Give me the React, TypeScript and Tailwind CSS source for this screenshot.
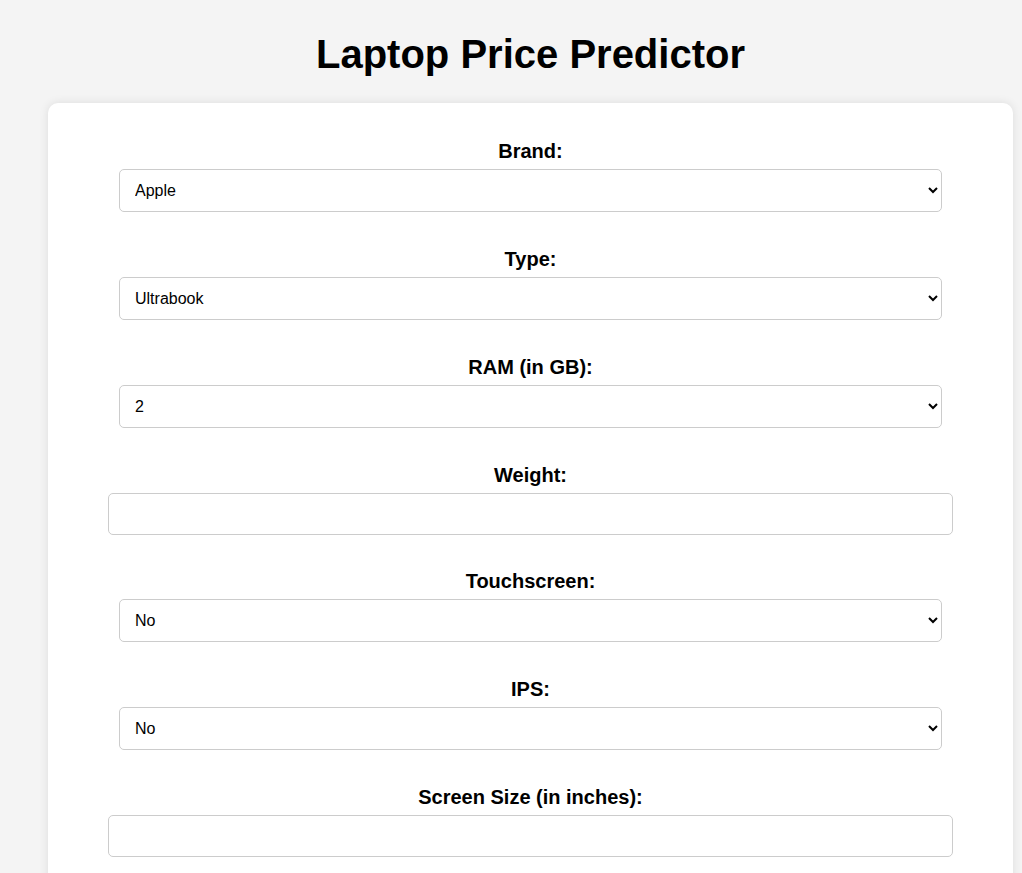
import React, { useState } from 'react';

type Field =
  | { kind: 'select'; label: string; options: string[] }
  | { kind: 'input'; label: string };

const fields: Field[] = [
  { kind: 'select', label: 'Brand:', options: ['Apple', 'HP', 'Acer', 'Asus', 'Dell', 'Lenovo', 'MSI', 'Toshiba'] },
  { kind: 'select', label: 'Type:', options: ['Ultrabook', 'Notebook', 'Netbook', 'Gaming', '2 in 1 Convertible', 'Workstation'] },
  { kind: 'select', label: 'RAM (in GB):', options: ['2', '4', '6', '8', '12', '16', '24', '32', '64'] },
  { kind: 'input', label: 'Weight:' },
  { kind: 'select', label: 'Touchscreen:', options: ['No', 'Yes'] },
  { kind: 'select', label: 'IPS:', options: ['No', 'Yes'] },
  { kind: 'input', label: 'Screen Size (in inches):' },
  { kind: 'select', label: 'Screen Resolution:', options: ['1920x1080', '1366x768', '1600x900', '3840x2160', '3200x1800', '2880x1800', '2560x1600', '2560x1440', '2304x1440'] },
  { kind: 'select', label: 'CPU:', options: ['Intel Core i5', 'Intel Core i7', 'Intel Core i3', 'Other Intel Processor', 'AMD Processor'] },
  { kind: 'select', label: 'HDD (in GB):', options: ['0', '128', '256', '512', '1024', '2048'] },
  { kind: 'select', label: 'SSD (in GB):', options: ['0', '8', '128', '256', '512', '1024'] },
  { kind: 'select', label: 'GPU:', options: ['Intel', 'AMD', 'Nvidia'] },
  { kind: 'select', label: 'OS:', options: ['Mac', 'Windows', 'Others/No OS/Linux'] },
];

export default function App() {
  const [values, setValues] = useState<Record<string, string>>({});

  const setValue = (label: string, value: string) => {
    setValues({ ...values, [label]: value });
  };

  return (
    <div className="min-h-screen bg-[#f4f4f4] text-black font-['Liberation_Sans',Arial,sans-serif]">
      <div className="ml-[48px] w-[965px] pt-[31px] pb-[40px]">
        <h1 className="text-center text-[40px] leading-[46px] font-bold mb-[26px]">
          Laptop Price Predictor
        </h1>

        <form
          className="bg-white rounded-[10px] shadow-[0_0_10px_rgba(0,0,0,0.1)] pt-[37px] pb-[40px] flex flex-col items-center"
          onSubmit={(e) => e.preventDefault()}
        >
          {fields.map((field) =>
            field.kind === 'select' ? (
              <div key={field.label} className="flex flex-col items-center mb-[36px]">
                <label className="text-[20px] leading-[23px] font-bold mb-[6px]">
                  {field.label}
                </label>
                <select
                  value={values[field.label] ?? field.options[0]}
                  onChange={(e) => setValue(field.label, e.target.value)}
                  className="w-[823px] h-[43px] pl-[11px] pr-[8px] text-[16px] border border-[#cccccc] rounded-[5px] bg-white"
                >
                  {field.options.map((opt) => (
                    <option key={opt} value={opt}>
                      {opt}
                    </option>
                  ))}
                </select>
              </div>
            ) : (
              <div key={field.label} className="flex flex-col items-center mb-[35px]">
                <label className="text-[20px] leading-[23px] font-bold mb-[6px]">
                  {field.label}
                </label>
                <input
                  type="text"
                  value={values[field.label] ?? ''}
                  onChange={(e) => setValue(field.label, e.target.value)}
                  className="w-[845px] h-[42px] px-[10px] text-[16px] border border-[#cccccc] rounded-[5px] bg-white"
                />
              </div>
            )
          )}

          <button
            type="submit"
            className="w-[845px] h-[44px] text-[18px] font-bold text-white bg-[#4caf50] rounded-[5px]"
          >
            Predict Price
          </button>
        </form>
      </div>
    </div>
  );
}
